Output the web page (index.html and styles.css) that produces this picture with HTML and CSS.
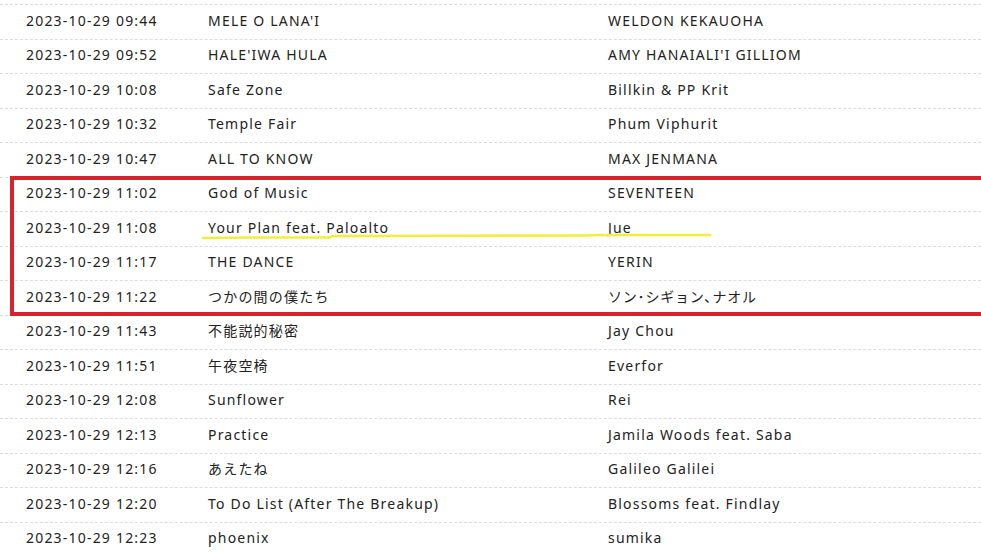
FILE: index.html
```html
<!DOCTYPE html>
<html lang="ja">
<head>
<meta charset="utf-8">
<title>On Air List</title>
<link rel="stylesheet" href="styles.css">
</head>
<body>
<div class="page">
  <div class="list">
    <div class="row"><span class="date">2023-10-29 09:44</span><span class="title">MELE O LANA'I</span><span class="artist">WELDON KEKAUOHA</span></div>
    <div class="row"><span class="date">2023-10-29 09:52</span><span class="title">HALE'IWA HULA</span><span class="artist">AMY HANAIALI'I GILLIOM</span></div>
    <div class="row"><span class="date">2023-10-29 10:08</span><span class="title">Safe Zone</span><span class="artist">Billkin &amp; PP Krit</span></div>
    <div class="row"><span class="date">2023-10-29 10:32</span><span class="title">Temple Fair</span><span class="artist">Phum Viphurit</span></div>
    <div class="row"><span class="date">2023-10-29 10:47</span><span class="title">ALL TO KNOW</span><span class="artist">MAX JENMANA</span></div>
    <div class="row"><span class="date">2023-10-29 11:02</span><span class="title">God of Music</span><span class="artist">SEVENTEEN</span></div>
    <div class="row"><span class="date">2023-10-29 11:08</span><span class="title">Your Plan feat. Paloalto</span><span class="artist">Jue</span></div>
    <div class="row"><span class="date">2023-10-29 11:17</span><span class="title">THE DANCE</span><span class="artist">YERIN</span></div>
    <div class="row"><span class="date">2023-10-29 11:22</span><span class="title">つかの間の僕たち</span><span class="artist jp">ソン･シギョン､ナオル</span></div>
    <div class="row"><span class="date">2023-10-29 11:43</span><span class="title">不能説的秘密</span><span class="artist">Jay Chou</span></div>
    <div class="row"><span class="date">2023-10-29 11:51</span><span class="title">午夜空椅</span><span class="artist">Everfor</span></div>
    <div class="row"><span class="date">2023-10-29 12:08</span><span class="title">Sunflower</span><span class="artist">Rei</span></div>
    <div class="row"><span class="date">2023-10-29 12:13</span><span class="title">Practice</span><span class="artist">Jamila Woods feat. Saba</span></div>
    <div class="row"><span class="date">2023-10-29 12:16</span><span class="title">あえたね</span><span class="artist">Galileo Galilei</span></div>
    <div class="row"><span class="date">2023-10-29 12:20</span><span class="title">To Do List (After The Breakup)</span><span class="artist">Blossoms feat. Findlay</span></div>
    <div class="row"><span class="date">2023-10-29 12:23</span><span class="title">phoenix</span><span class="artist">sumika</span></div>
  </div>
  <div class="redbox"></div>
  <svg class="marker" width="981" height="552" viewBox="0 0 981 552">
    <polyline points="203,238 260,237.5 330,237.5 332,236 450,235.8 585,235.5 600,235 710,235" fill="none" stroke="#f3ee3a" stroke-width="2.6" stroke-linecap="round" stroke-linejoin="round"/>
  </svg>
</div>
</body>
</html>
```

FILE: styles.css
```css
html, body {
  margin: 0;
  padding: 0;
  background: #ffffff;
}
.page {
  position: relative;
  width: 981px;
  height: 552px;
  overflow: hidden;
  padding-top: 4px;
  box-sizing: border-box;
}
.list {
  display: flex;
  flex-direction: column;
}
.row {
  display: grid;
  grid-template-columns: 182px 400px 1fr;
  align-items: center;
  height: 34.5px;
  box-sizing: border-box;
  padding-left: 26px;
  padding-bottom: 2px;
  border-top: 1px dashed #dcdcdc;
  font-family: "Noto Sans", "Noto Sans CJK JP", sans-serif;
  font-size: 14px;
  line-height: 18px;
  letter-spacing: 1.2px;
  color: #222;
  white-space: nowrap;
}
.jp {
  letter-spacing: 0.8px;
}
.redbox {
  position: absolute;
  left: 10px;
  top: 176px;
  width: 990px;
  height: 140px;
  box-sizing: border-box;
  border: 4px solid #d8222c;
}
.marker {
  position: absolute;
  left: 0;
  top: 0;
  pointer-events: none;
}
```
